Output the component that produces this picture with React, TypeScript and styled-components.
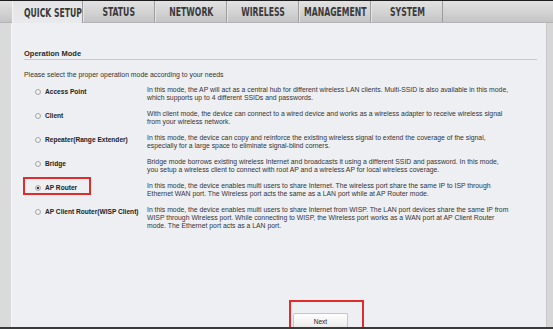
import styled, { createGlobalStyle } from 'styled-components';

const tabs = ['QUICK SETUP', 'STATUS', 'NETWORK', 'WIRELESS', 'MANAGEMENT', 'SYSTEM'];

const modes = [
  {
    name: 'Access Point',
    lines: [
      'In this mode, the AP will act as a central hub for different wireless LAN clients. Multi-SSID is also available in this mode,',
      'which supports up to 4 different SSIDs and passwords.',
    ],
  },
  {
    name: 'Client',
    lines: [
      'With client mode, the device can connect to a wired device and works as a wireless adapter to receive wireless signal',
      'from your wireless network.',
    ],
  },
  {
    name: 'Repeater(Range Extender)',
    lines: [
      'In this mode, the device can copy and reinforce the existing wireless signal to extend the coverage of the signal,',
      'especially for a large space to eliminate signal-blind corners.',
    ],
  },
  {
    name: 'Bridge',
    lines: [
      'Bridge mode borrows existing wireless Internet and broadcasts it using a different SSID and password. In this mode,',
      'you setup a wireless client to connect with root AP and a wireless AP for local wireless coverage.',
    ],
  },
  {
    name: 'AP Router',
    checked: true,
    lines: [
      'In this mode, the device enables multi users to share Internet. The wireless port share the same IP to ISP through',
      'Ethernet WAN port. The Wireless port acts the same as a LAN port while at AP Router mode.',
    ],
  },
  {
    name: 'AP Client Router(WISP Client)',
    lines: [
      'In this mode, the device enables multi users to share Internet from WISP. The LAN port devices share the same IP from',
      'WISP through Wireless port. While connecting to WISP, the Wireless port works as a WAN port at AP Client Router',
      'mode. The Ethernet port acts as a LAN port.',
    ],
  },
];

const App = () => {
  return (
    <>
      <GlobalStyle />
      <Page>
        <TopLine />
        <TabBar>
          {tabs.map((t, i) => (
            <Tab key={t} active={i === 0}>
              <TabLabel>{t}</TabLabel>
            </Tab>
          ))}
        </TabBar>
        <Main>
          <Gutter />
          <Panel>
            <Title>Operation Mode</Title>
            <Intro>Please select the proper operation mode according to your needs</Intro>
            <ModeList>
              {modes.map((m) => (
                <ModeRow key={m.name}>
                  <ModeCell>
                    <ModeLabel highlight={!!m.checked}>
                      <Radio checked={!!m.checked} />
                      {m.name}
                    </ModeLabel>
                  </ModeCell>
                  <Desc>
                    {m.lines.map((l) => (
                      <DescLine key={l}>{l}</DescLine>
                    ))}
                  </Desc>
                </ModeRow>
              ))}
            </ModeList>
            <Footer>
              <ButtonFrame>
                <NextButton>Next</NextButton>
              </ButtonFrame>
            </Footer>
          </Panel>
          <RightStrip />
        </Main>
        <BottomLine />
      </Page>
    </>
  );
};

const GlobalStyle = createGlobalStyle`
  html, body {
    margin: 0;
    padding: 0;
    background: #eeeff3;
  }
  body {
    font-family: 'Liberation Sans', Arial, sans-serif;
  }
`;

const Page = styled.div`
  width: 553px;
  height: 329px;
  display: flex;
  flex-direction: column;
  overflow: hidden;
  background: #eeeff3;
`;

const TopLine = styled.div`
  height: 1px;
  background: #1c1c1c;
`;

const TabBar = styled.div`
  height: 22px;
  display: flex;
  padding-left: 12px;
  background: linear-gradient(#e2e2e2, #d2d2d2 55%, #c4c4c4);
  border-bottom: 1px solid #b4b4b4;
  box-sizing: border-box;
`;

const Tab = styled.div<{ active: boolean }>`
  width: 72px;
  display: flex;
  align-items: center;
  justify-content: center;
  box-sizing: border-box;
  border-right: 1px solid #9c9c9c;
  border-left: 1px solid ${({ active }) => (active ? '#f4f4f4' : '#e6e6e6')};
  background: ${({ active }) => (active ? 'linear-gradient(#e4e4e6, #e9eaed)' : 'transparent')};
  margin-bottom: ${({ active }) => (active ? '-1px' : '0')};
  padding-left: ${({ active }) => (active ? '10px' : '0')};
  &:first-child {
    width: 71px;
  }
`;

const TabLabel = styled.span`
  display: inline-block;
  font-family: 'Liberation Sans Narrow', 'DejaVu Sans Condensed', 'Liberation Sans', sans-serif;
  font-weight: bold;
  font-size: 13px;
  color: #3a3a3a;
  transform: scaleX(0.66);
  white-space: nowrap;
`;

const Main = styled.div`
  flex: 1;
  display: flex;
  min-height: 0;
`;

const Gutter = styled.div`
  width: 12px;
  background: #dadada;
  border-right: 1px solid #f6f6f6;
  box-sizing: border-box;
`;

const Panel = styled.div`
  flex: 1;
  display: flex;
  flex-direction: column;
  padding: 0 9px 0 12px;
  background: #eeeff3;
`;

const Title = styled.div`
  margin-top: 26px;
  padding-bottom: 1px;
  line-height: 9px;
  font-size: 7.5px;
  font-weight: bold;
  color: #2a2a2a;
  border-bottom: 1px solid #c8c9cc;
`;

const Intro = styled.div`
  margin-top: 11px;
  line-height: 8px;
  font-size: 6.9px;
  color: #333;
`;

const ModeList = styled.div`
  margin-top: 7px;
  display: flex;
  flex-direction: column;
`;

const ModeRow = styled.div`
  display: grid;
  grid-template-columns: 123px 1fr;
  min-height: 24px;
  align-items: start;
`;

const ModeCell = styled.div`
  padding-left: 11px;
  line-height: 8px;
`;

const ModeLabel = styled.span<{ highlight: boolean }>`
  position: relative;
  display: inline-flex;
  align-items: center;
  gap: 4px;
  font-size: 6.6px;
  font-weight: bold;
  color: #222;
  white-space: nowrap;
  &::after {
    content: '';
    display: ${({ highlight }) => (highlight ? 'block' : 'none')};
    position: absolute;
    left: -12px;
    top: -7px;
    width: 68px;
    height: 18px;
    box-sizing: border-box;
    border: 2px solid #e22b2b;
  }
`;

const Radio = styled.span<{ checked: boolean }>`
  width: 6px;
  height: 6px;
  border-radius: 50%;
  box-sizing: border-box;
  border: 1px solid #a9a9a9;
  background: ${({ checked }) =>
    checked
      ? 'radial-gradient(circle, #3c3c3c 0 1.3px, #e4e4e4 1.6px)'
      : 'radial-gradient(circle at 40% 40%, #ffffff, #d6d6d6)'};
`;

const Desc = styled.div`
  font-size: 6.85px;
  line-height: 8px;
  color: #333;
`;

const DescLine = styled.div`
  white-space: nowrap;
`;

const Footer = styled.div`
  margin-top: auto;
  display: flex;
  padding-left: 265px;
`;

const ButtonFrame = styled.div`
  border: 2px solid #e22b2b;
  border-bottom: none;
  padding: 11px 14px 0 2px;
`;

const NextButton = styled.div`
  width: 55px;
  height: 14px;
  box-sizing: border-box;
  border: 1px solid #c6c6c6;
  border-bottom: none;
  border-radius: 2px 2px 0 0;
  background: linear-gradient(#fefefe, #ececec);
  font-size: 6.5px;
  color: #222;
  display: flex;
  justify-content: center;
  padding-top: 4px;
`;

const RightStrip = styled.div`
  width: 7px;
  background: #d6d6d6;
  border-left: 1px solid #c8c8c8;
  box-sizing: border-box;
`;

const BottomLine = styled.div`
  height: 2px;
  background: #3a3a3a;
`;

export default App;
